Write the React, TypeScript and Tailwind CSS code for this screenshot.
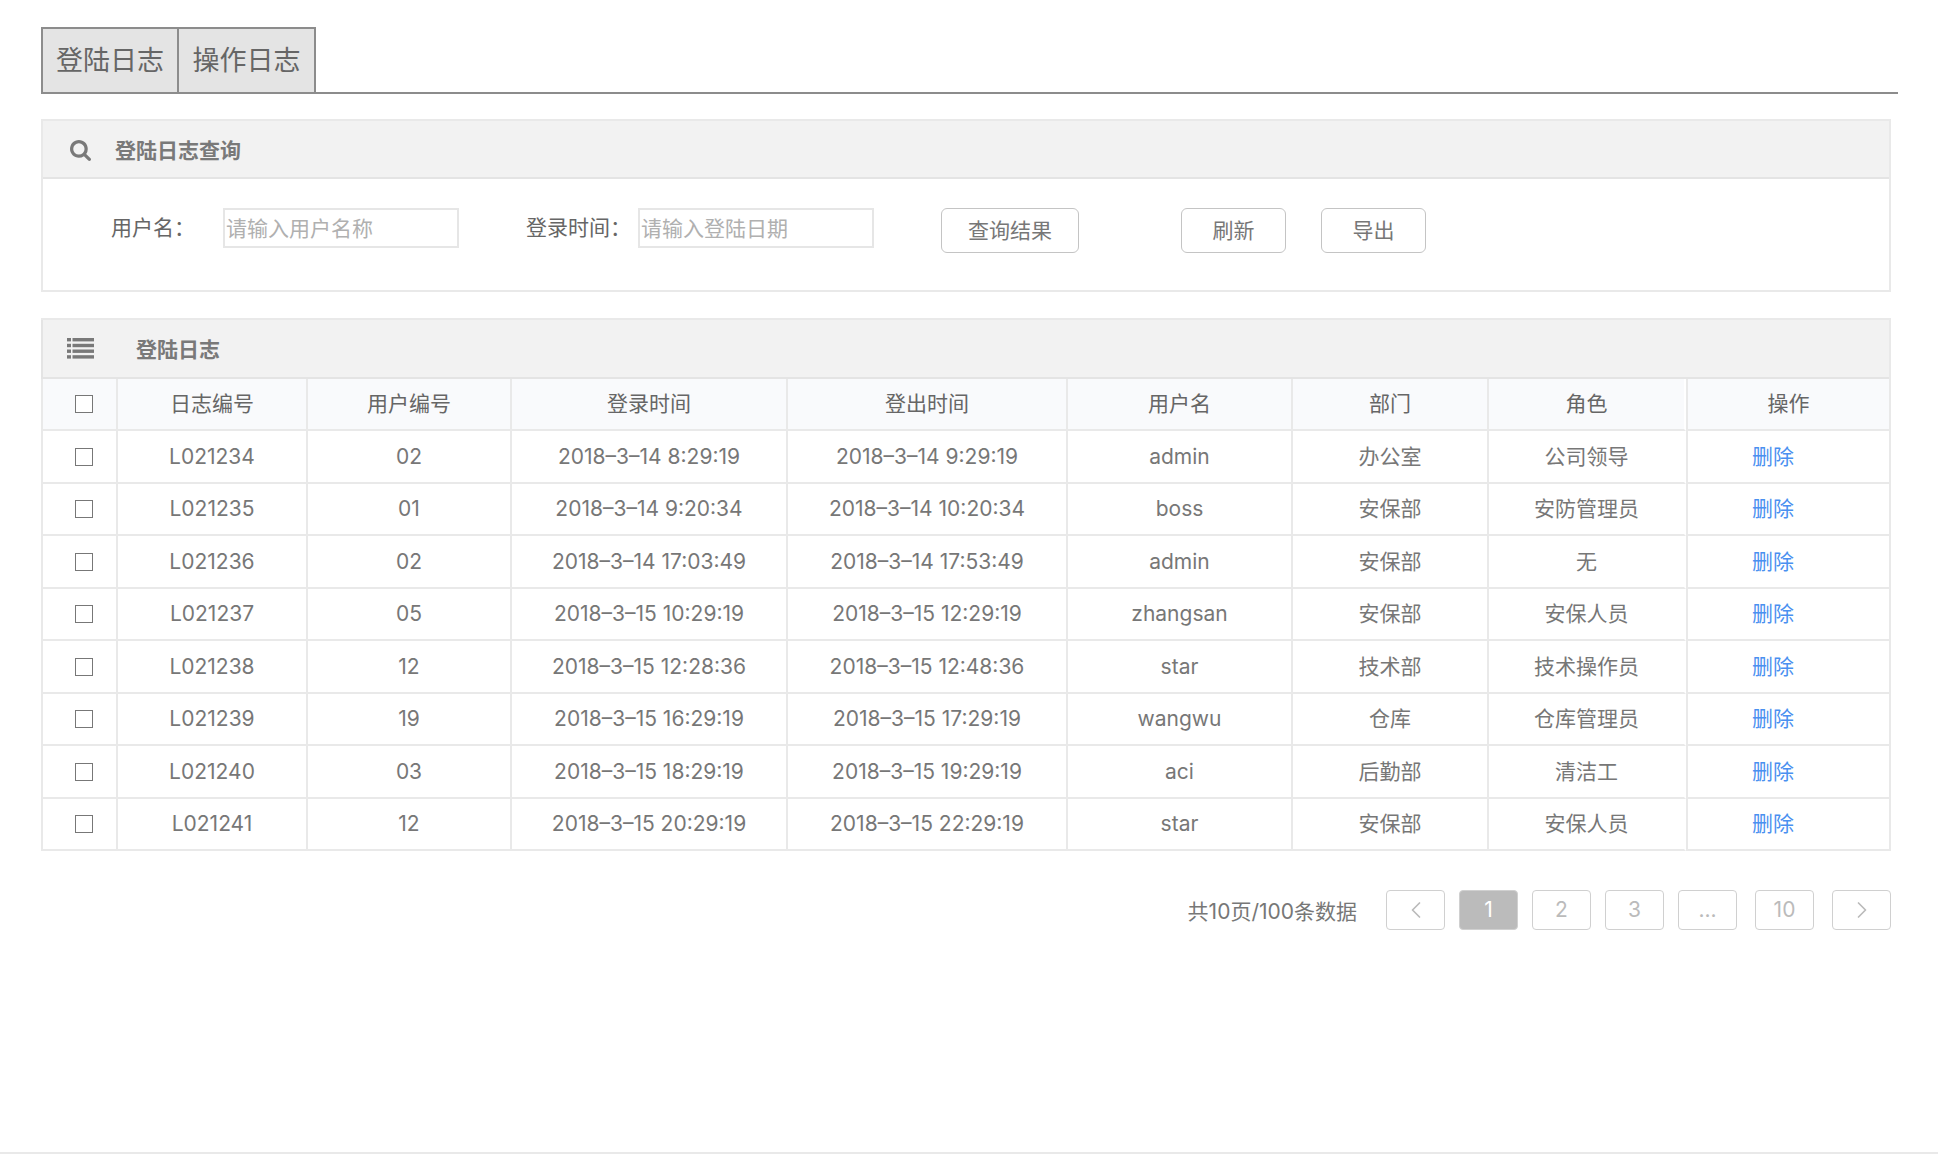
import { useState } from 'react';
import { ChevronLeft, ChevronRight } from 'lucide-react';

const tabs = ['登陆日志', '操作日志'];

const columns = [
  { title: '日志编号', width: 'w-[190px]' },
  { title: '用户编号', width: 'w-[204px]' },
  { title: '登录时间', width: 'w-[276px]' },
  { title: '登出时间', width: 'w-[280px]' },
  { title: '用户名', width: 'w-[225px]' },
  { title: '部门', width: 'w-[196px]' },
  { title: '角色', width: 'w-[199px]' },
  { title: '操作', width: 'w-[203px]' },
];

const logs = [
  { id: 'L021234', userId: '02', login: '2018–3–14 8:29:19', logout: '2018–3–14 9:29:19', user: 'admin', dept: '办公室', role: '公司领导' },
  { id: 'L021235', userId: '01', login: '2018–3–14 9:20:34', logout: '2018–3–14 10:20:34', user: 'boss', dept: '安保部', role: '安防管理员' },
  { id: 'L021236', userId: '02', login: '2018–3–14 17:03:49', logout: '2018–3–14 17:53:49', user: 'admin', dept: '安保部', role: '无' },
  { id: 'L021237', userId: '05', login: '2018–3–15 10:29:19', logout: '2018–3–15 12:29:19', user: 'zhangsan', dept: '安保部', role: '安保人员' },
  { id: 'L021238', userId: '12', login: '2018–3–15 12:28:36', logout: '2018–3–15 12:48:36', user: 'star', dept: '技术部', role: '技术操作员' },
  { id: 'L021239', userId: '19', login: '2018–3–15 16:29:19', logout: '2018–3–15 17:29:19', user: 'wangwu', dept: '仓库', role: '仓库管理员' },
  { id: 'L021240', userId: '03', login: '2018–3–15 18:29:19', logout: '2018–3–15 19:29:19', user: 'aci', dept: '后勤部', role: '清洁工' },
  { id: 'L021241', userId: '12', login: '2018–3–15 20:29:19', logout: '2018–3–15 22:29:19', user: 'star', dept: '安保部', role: '安保人员' },
];

const cell = 'border-b-2 border-l-2 border-[#e9e9e9] p-0';
const roleCell = 'border-b-2 border-l-2 border-r-2 border-[#e9e9e9] border-r-white p-0';
const checkbox =
  'block mx-auto size-[18px] appearance-none border border-[#777777] bg-white checked:bg-[#777777]';
const textInput =
  'mr-[67px] h-10 w-[236px] border-2 border-[#e6e6e6] px-px placeholder:text-[#b0b0b0]';
const actionButton = 'h-[45px] rounded-md border border-[#c4c4c4] bg-white text-[#777777]';
const pageButton =
  'flex h-10 w-[59px] items-center justify-center rounded border border-[#d0d0d0] text-[#bbbbbb]';

function SearchIcon() {
  return (
    <svg className="size-[21px] fill-[#797979]" viewBox="0 0 1664 1664" aria-hidden="true">
      <path d="M1152 704q0-185-131.5-316.5t-316.5-131.5-316.5 131.5-131.5 316.5 131.5 316.5 316.5 131.5 316.5-131.5 131.5-316.5zm512 832q0 52-38 90t-90 38q-54 0-90-38l-343-342q-179 124-399 124-143 0-273.5-55.5t-225-150-150-225-55.5-273.5 55.5-273.5 150-225 225-150 273.5-55.5 273.5 55.5 225 150 150 225 55.5 273.5q0 220-124 399l343 343q37 37 37 90z" />
    </svg>
  );
}

function ListIcon() {
  return (
    <svg className="h-[21px] w-[27px] fill-[#797979]" viewBox="0 0 27 21" aria-hidden="true">
      {[0, 5.8, 11.5, 17.2].map((y) => (
        <g key={y}>
          <rect x="0" y={y} width="4" height="3.4" />
          <rect x="5.5" y={y} width="21.5" height="3.4" />
        </g>
      ))}
    </svg>
  );
}

export default function App() {
  const [activeTab, setActiveTab] = useState(tabs[0]);
  const [page, setPage] = useState(1);
  const [selected, setSelected] = useState<string[]>([]);

  const toggleRow = (id: string) => {
    setSelected(selected.includes(id) ? selected.filter((s) => s !== id) : [...selected, id]);
  };

  const toggleAll = () => {
    setSelected(selected.length === logs.length ? [] : logs.map((log) => log.id));
  };

  return (
    <div className="min-h-screen border-b-2 border-[#e9e9e9] bg-white pt-[27px] pr-10 pb-10 pl-[41px] font-[Inter,'Noto_Sans_CJK_SC',sans-serif] text-[21px] leading-[30px] text-[#666666]">
      <div role="tablist" className="flex border-b-2 border-[#8c8c8c]">
        {tabs.map((tab) => (
          <button
            key={tab}
            type="button"
            role="tab"
            aria-selected={activeTab === tab}
            onClick={() => setActiveTab(tab)}
            className="h-[65px] w-[137px] border-t-2 border-r-2 border-[#8c8c8c] bg-[#e4e4e4] text-[27px] first:w-[138px] first:border-l-2"
          >
            {tab}
          </button>
        ))}
      </div>

      <div className="mr-[7px]">
        <section className="mt-[25px] border-2 border-[#e9e9e9]">
          <div className="flex h-[58px] items-center gap-6 border-b-2 border-[#e4e4e4] bg-[#f2f2f2] pt-[3px] pl-[27px]">
            <SearchIcon />
            <h2 className="font-bold text-[#797979]">登陆日志查询</h2>
          </div>
          <form className="flex items-start pt-[29px] pb-[37px] pl-[68px]" onSubmit={(e) => e.preventDefault()}>
            <label htmlFor="username" className="mr-7 leading-10">用户名：</label>
            <input id="username" placeholder="请输入用户名称" className={textInput} />
            <label htmlFor="login-date" className="mr-[7px] leading-10">登录时间：</label>
            <input id="login-date" placeholder="请输入登陆日期" className={textInput} />
            <button type="submit" className={`${actionButton} mr-[102px] w-[138px]`}>查询结果</button>
            <button type="button" className={`${actionButton} mr-[35px] w-[105px]`}>刷新</button>
            <button type="button" className={`${actionButton} w-[105px]`}>导出</button>
          </form>
        </section>

        <section className="mt-[26px] border-t-2 border-r-2 border-[#e9e9e9]">
          <div className="flex h-[59px] items-center gap-[42px] border-b-2 border-l-2 border-[#e4e4e4] bg-[#f2f2f2] pl-6">
            <ListIcon />
            <h2 className="pt-[3px] font-bold text-[#797979]">登陆日志</h2>
          </div>
          <table className="w-full table-fixed border-separate border-spacing-0 text-center">
            <thead>
              <tr className="h-[52px] bg-[#f9fafc]">
                <th className={`${cell} w-[75px] pl-2`}>
                  <input
                    type="checkbox"
                    aria-label="全选"
                    checked={selected.length === logs.length}
                    onChange={toggleAll}
                    className={checkbox}
                  />
                </th>
                {columns.map((col) => (
                  <th
                    key={col.title}
                    className={`${col.title === '角色' ? roleCell : cell} ${col.width} font-normal`}
                  >
                    {col.title}
                  </th>
                ))}
              </tr>
            </thead>
            <tbody className="text-[#777777]">
              {logs.map((log) => (
                <tr key={log.id} className="odd:h-[53px] even:h-[52px]">
                  <td className={`${cell} pl-2`}>
                    <input
                      type="checkbox"
                      aria-label={log.id}
                      checked={selected.includes(log.id)}
                      onChange={() => toggleRow(log.id)}
                      className={checkbox}
                    />
                  </td>
                  <td className={cell}>{log.id}</td>
                  <td className={cell}>{log.userId}</td>
                  <td className={cell}>{log.login}</td>
                  <td className={cell}>{log.logout}</td>
                  <td className={cell}>{log.user}</td>
                  <td className={cell}>{log.dept}</td>
                  <td className={roleCell}>{log.role}</td>
                  <td className={`${cell} pl-16 text-left`}>
                    <a href="#" className="text-[#4a90f0]">删除</a>
                  </td>
                </tr>
              ))}
            </tbody>
          </table>
        </section>

        <nav aria-label="分页" className="mt-[39px] flex items-center justify-end gap-[14px]">
          <span className="mr-[15px] pt-[3px] text-[#777777]">共10页/100条数据</span>
          <button type="button" aria-label="上一页" className={pageButton} onClick={() => setPage(Math.max(1, page - 1))}>
            <ChevronLeft className="size-7" strokeWidth={1.5} />
          </button>
          {[1, 2, 3].map((n) => (
            <button
              key={n}
              type="button"
              onClick={() => setPage(n)}
              className={page === n ? `${pageButton} bg-[#bbbbbb] text-white` : pageButton}
            >
              {n}
            </button>
          ))}
          <button type="button" className={pageButton}>...</button>
          <button type="button" className={`${pageButton} ml-1`} onClick={() => setPage(10)}>10</button>
          <button type="button" aria-label="下一页" className={`${pageButton} ml-1`} onClick={() => setPage(Math.min(10, page + 1))}>
            <ChevronRight className="size-7" strokeWidth={1.5} />
          </button>
        </nav>
      </div>
    </div>
  );
}
